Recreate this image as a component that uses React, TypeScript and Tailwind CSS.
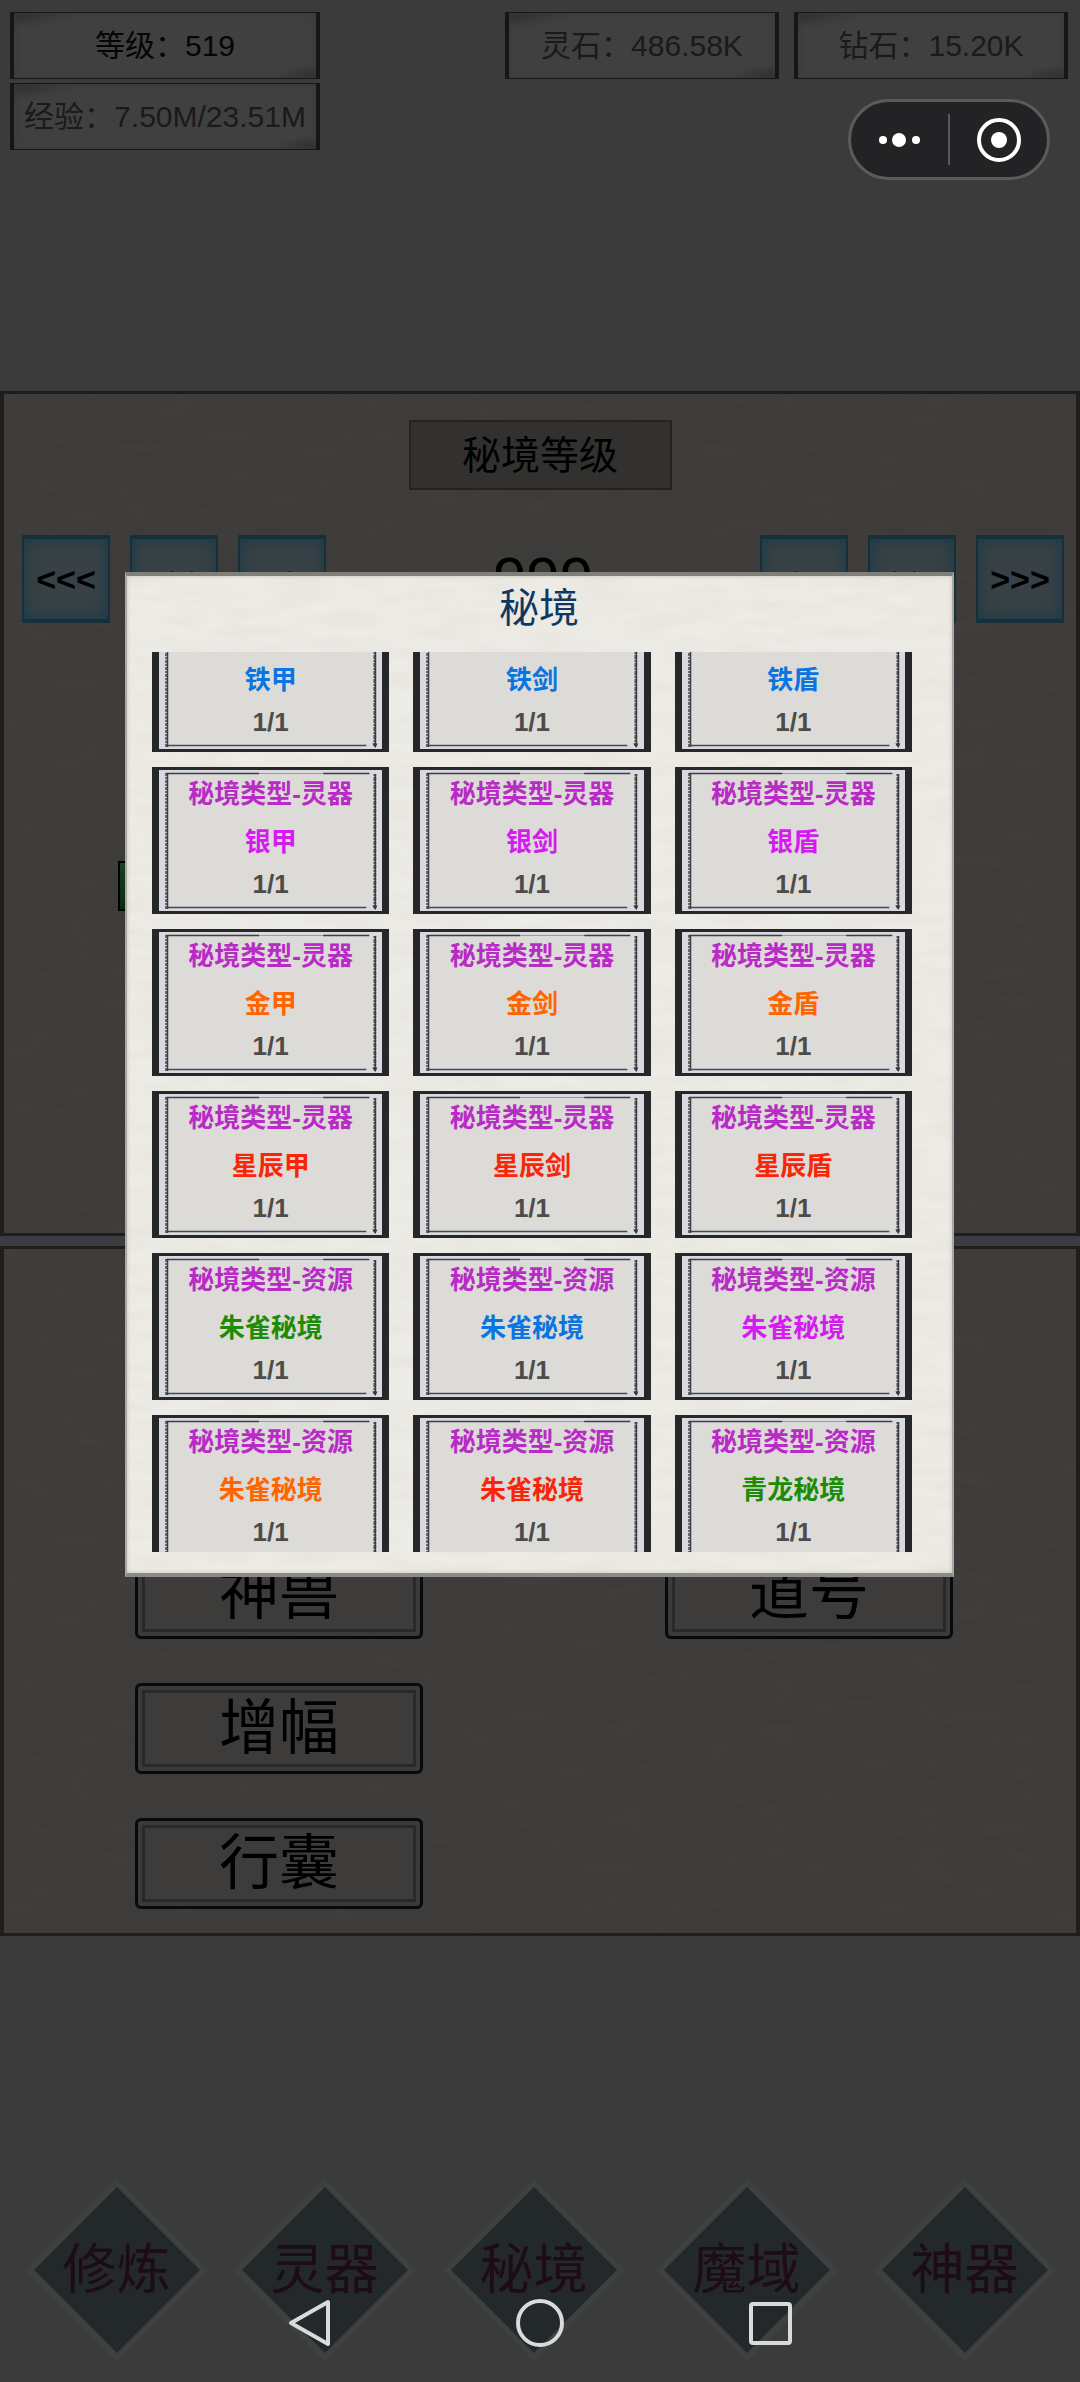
import { useLayoutEffect, useRef } from "react";

interface Realm {
  type: string;
  name: string;
  count: string;
  color: string;
}

const COLORS = {
  green: "text-[#1c8c08]",
  blue: "text-[#0a74e0]",
  purple: "text-[#d41cf0]",
  orange: "text-[#ff6400]",
  red: "text-[#fa2408]",
};

const GEAR = "秘境类型-灵器";
const RESOURCE = "秘境类型-资源";

const realms: Realm[] = [
  { type: GEAR, name: "铁甲", count: "1/1", color: COLORS.blue },
  { type: GEAR, name: "铁剑", count: "1/1", color: COLORS.blue },
  { type: GEAR, name: "铁盾", count: "1/1", color: COLORS.blue },
  { type: GEAR, name: "银甲", count: "1/1", color: COLORS.purple },
  { type: GEAR, name: "银剑", count: "1/1", color: COLORS.purple },
  { type: GEAR, name: "银盾", count: "1/1", color: COLORS.purple },
  { type: GEAR, name: "金甲", count: "1/1", color: COLORS.orange },
  { type: GEAR, name: "金剑", count: "1/1", color: COLORS.orange },
  { type: GEAR, name: "金盾", count: "1/1", color: COLORS.orange },
  { type: GEAR, name: "星辰甲", count: "1/1", color: COLORS.red },
  { type: GEAR, name: "星辰剑", count: "1/1", color: COLORS.red },
  { type: GEAR, name: "星辰盾", count: "1/1", color: COLORS.red },
  { type: RESOURCE, name: "朱雀秘境", count: "1/1", color: COLORS.green },
  { type: RESOURCE, name: "朱雀秘境", count: "1/1", color: COLORS.blue },
  { type: RESOURCE, name: "朱雀秘境", count: "1/1", color: COLORS.purple },
  { type: RESOURCE, name: "朱雀秘境", count: "1/1", color: COLORS.orange },
  { type: RESOURCE, name: "朱雀秘境", count: "1/1", color: COLORS.red },
  { type: RESOURCE, name: "青龙秘境", count: "1/1", color: COLORS.green },
];

const tabs = ["修炼", "灵器", "秘境", "魔域", "神器"];

export default function App() {
  return (
    <div className="relative flex min-h-screen flex-col overflow-hidden bg-[#3b3b3c] font-['Liberation_Sans','Noto_Sans_CJK_SC',sans-serif] text-black">
      <header className="flex items-start justify-between pt-3 pr-3 pl-[10px]">
        <div className="flex w-[310px] flex-col gap-1">
          <Stat text="等级：519" strong />
          <Stat text="经验：7.50M/23.51M" />
        </div>
        <div className="flex gap-[15px]">
          <div className="w-[274px]">
            <Stat text="灵石：486.58K" />
          </div>
          <div className="w-[274px]">
            <Stat text="钻石：15.20K" />
          </div>
        </div>
      </header>

      <main className="mt-[241px] flex flex-col gap-[10px] bg-[#3a3d41]">
        {/* Realm level */}
        <section className="relative flex flex-col border-x-4 border-y-3 border-[#1f1e1d] bg-[#3d3c3a] pt-[26px] pb-[322px]">
          <Paper className="opacity-[0.02]" />
          <button className="relative mx-auto h-[70px] w-[263px] border-2 border-[#242321] bg-[#32312f] text-[39px] leading-none">
            秘境等级
          </button>
          <div className="relative mt-[45px] flex items-center justify-between pr-3 pl-[18px]">
            <div className="flex gap-5">
              <StepButton text="<<<" />
              <StepButton text="<<" />
              <StepButton text="<" />
            </div>
            <output className="text-[60px] leading-none">999</output>
            <div className="flex gap-5">
              <StepButton text=">" />
              <StepButton text=">>" />
              <StepButton text=">>>" />
            </div>
          </div>
          <div className="relative mt-[238px] mr-[130px] ml-[114px] h-[50px] border-2 border-black bg-linear-to-b from-[#1b4026] to-[#062b10]" />
        </section>

        {/* Feature menu */}
        <section className="relative flex justify-between border-x-4 border-y-3 border-[#1f1e1d] bg-[#3d3c3a] pt-[299px] pr-[123px] pb-6 pl-[131px]">
          <Paper className="opacity-[0.02]" />
          <div className="relative flex flex-col gap-11">
            <MenuButton text="神兽" />
            <MenuButton text="增幅" />
            <MenuButton text="行囊" />
          </div>
          <div className="relative flex flex-col gap-11">
            <MenuButton text="道号" />
          </div>
        </section>
      </main>

      <nav className="mt-auto grid grid-cols-[209fr_207fr_211fr_215fr_221fr] pt-[200px] pr-[5px] pb-[20px] pl-3">
        {tabs.map((tab) => (
          <TabButton key={tab} text={tab} />
        ))}
      </nav>

      <RealmDialog />
      <Capsule />
      <SystemBar />
    </div>
  );
}

function Stat({ text, strong }: { text: string; strong?: boolean }) {
  return (
    <div
      className={`flex h-[67px] w-full items-center justify-center border-x-4 border-y border-[#161617] bg-[#404040] bg-[radial-gradient(60px_16px_at_top_left,#2e2e2f,#40404000),radial-gradient(40px_14px_at_bottom_right,#2e2e2f,#40404000)] text-[30px] leading-none whitespace-nowrap shadow-[inset_0_0_6px_#39393a] ${
        strong ? "text-[#050505]" : "text-[#1a1a1b]"
      }`}
    >
      {text}
    </div>
  );
}

function StepButton({ text }: { text: string }) {
  return (
    <button className="size-[88px] border-x-2 border-y-4 border-[#14303a] bg-[#384145] text-[34px] leading-none font-bold shadow-[inset_0_0_16px_#183a47]">
      {text}
    </button>
  );
}

function MenuButton({ text }: { text: string }) {
  return (
    <button className="h-[91px] w-[288px] rounded-md border-3 border-[#090909] bg-[#393a3a] p-1">
      <span className="flex size-full items-center justify-center border-3 border-[#262a2d] bg-[#3d3c3a] text-[60px] leading-none">
        {text}
      </span>
    </button>
  );
}

function TabButton({ text }: { text: string }) {
  return (
    <button className="relative mx-auto flex size-[184px] items-center justify-center text-[54px] leading-none text-[#1d0b17]">
      <svg viewBox="0 0 184 184" className="absolute inset-0 size-full" aria-hidden="true">
        <path d="M92 1 183 92 92 183 1 92Z" fill="#3d4240" />
        <path d="M92 9 175 92 92 175 9 92Z" fill="#23282a" />
      </svg>
      <span className="relative">{text}</span>
    </button>
  );
}

function RealmDialog() {
  const listRef = useRef<HTMLDivElement>(null);

  useLayoutEffect(() => {
    if (listRef.current) listRef.current.scrollTop = 47;
  }, []);

  return (
    <div className="absolute inset-0 pt-[572px] pr-[126px] pl-[125px]">
      <div
        role="dialog"
        aria-labelledby="realm-title"
        className="relative border-x-2 border-t-4 border-b-4 border-t-[#817f7a] border-r-[#aaa8a2] border-b-[#8c8a85] border-l-[#aaa8a2] bg-[#edebe5] pt-3 pr-10 pb-[21px] pl-[25px] shadow-[inset_0_0_4px_#c4c2bc]"
      >
        <Paper className="opacity-20" />
        <h2 id="realm-title" className="relative pl-[14px] text-center text-[40px] leading-10 text-[#10375f]">
          秘境
        </h2>
        <div ref={listRef} className="relative mt-6 h-[900px] overflow-y-auto [scrollbar-width:none]">
          <div className="grid grid-cols-3 gap-x-6 gap-y-[15px]">
            {realms.map((realm, i) => (
              <RealmCard key={i} realm={realm} />
            ))}
          </div>
        </div>
      </div>
    </div>
  );
}

function RealmCard({ realm }: { realm: Realm }) {
  return (
    <button className="relative flex h-[147px] flex-col items-center border-x-7 border-y-3 border-[#262728] bg-[#dcdbd7] pt-2 text-[26px] leading-8 font-bold">
      <InkFrame />
      <span className="relative text-[#b92bc6]">{realm.type}</span>
      <span className={`relative mt-4 ${realm.color}`}>{realm.name}</span>
      <span className="relative mt-[10px] text-[#4d4c49]">{realm.count}</span>
    </button>
  );
}

// Brush-drawn inner frame of a card
function InkFrame() {
  return (
    <svg viewBox="0 0 223 141" preserveAspectRatio="none" className="absolute inset-0 size-full" fill="none" aria-hidden="true">
      <path d="M0 0H223V141H0Z M9 4V136H215V4Z" fill="#d8dadf" fillRule="evenodd" />
      <path d="M7.500 3V139" stroke="#6b6d70" strokeWidth="3" strokeDasharray="3 1 2 1" />
      <path d="M8.500 3V139" stroke="#3c3e41" strokeWidth="1.500" />
      <path d="M215.500 4V138" stroke="#6b6d70" strokeWidth="3" strokeDasharray="2 1 4 1" />
      <path d="M216 4V139" stroke="#37393c" strokeWidth="1.500" />
      <path d="M7 3.500H100" stroke="#3c3e41" strokeWidth="1.500" />
      <path d="M100 3.500H170" stroke="#9a9b9d" strokeWidth="1" />
      <path d="M164 3.500H210" stroke="#3c3e41" strokeWidth="1.500" />
      <path d="M7 137.500H207" stroke="#46484b" strokeWidth="1.500" />
      <path d="M213 135.500H218L216 140Z" fill="#37393c" />
    </svg>
  );
}

// Fibrous paper grain behind a panel's content
function Paper({ className }: { className: string }) {
  return (
    <svg className={`absolute inset-0 size-full ${className}`} aria-hidden="true">
      <filter id="paper-grain">
        <feTurbulence type="fractalNoise" baseFrequency="0.02 0.08" numOctaves="3" seed="4" />
        <feColorMatrix values="0 0 0 0 0.62  0 0 0 0 0.6  0 0 0 0 0.54  1.6 0 0 0 -0.55" />
      </filter>
      <rect width="100%" height="100%" filter="url(#paper-grain)" />
    </svg>
  );
}

function Capsule() {
  return (
    <div className="absolute top-[99px] right-[30px] flex h-[81px] w-[202px] items-center rounded-full border-3 border-[#5b5b5d] bg-[#232325] text-white">
      <button aria-label="更多" className="flex h-full flex-1 items-center justify-center">
        <svg width="44" height="16" viewBox="0 0 44 16" fill="currentColor">
          <circle cx="5" cy="8" r="4" />
          <circle cx="21" cy="8" r="7" />
          <circle cx="38" cy="8" r="4" />
        </svg>
      </button>
      <span className="h-[51px] w-[2px] bg-[#58585a]" />
      <button aria-label="关闭" className="flex h-full flex-1 items-center justify-center">
        <svg width="44" height="44" viewBox="0 0 44 44" fill="none">
          <circle cx="22" cy="22" r="20" stroke="currentColor" strokeWidth="4" />
          <circle cx="22" cy="22" r="8" fill="currentColor" />
        </svg>
      </button>
    </div>
  );
}

function SystemBar() {
  return (
    <div className="absolute inset-x-0 bottom-[35px] flex justify-center gap-[182px] text-[#d8dadc]">
      <button aria-label="返回">
        <svg width="48" height="48" viewBox="0 0 48 48" fill="none" stroke="currentColor" strokeWidth="4" strokeLinejoin="round">
          <path d="M42 3V45L5 24Z" />
        </svg>
      </button>
      <button aria-label="主页">
        <svg width="48" height="48" viewBox="0 0 48 48" fill="none" stroke="currentColor" strokeWidth="4">
          <circle cx="24" cy="24" r="22" />
        </svg>
      </button>
      <button aria-label="最近任务">
        <svg width="48" height="48" viewBox="0 0 48 48" fill="none" stroke="currentColor" strokeWidth="4">
          <rect x="5" y="5" width="39" height="39" rx="2" />
        </svg>
      </button>
    </div>
  );
}
